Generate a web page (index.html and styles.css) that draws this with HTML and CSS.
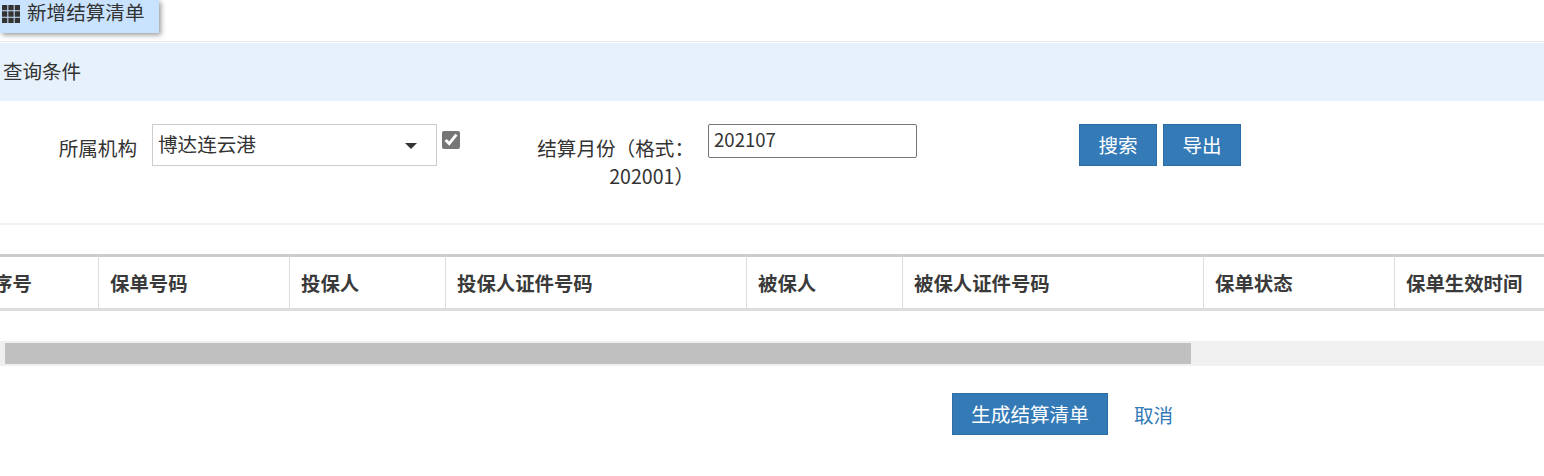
FILE: index.html
```html
<!DOCTYPE html>
<html lang="zh-CN">
<head>
<meta charset="utf-8">
<title>新增结算清单</title>
<link rel="stylesheet" href="styles.css">
</head>
<body>
<header class="tab">
  <svg class="tab-icon" width="18" height="18" viewBox="0 0 17 17" aria-hidden="true">
    <path d="M0 0h5v5H0zM6 0h5v5H6zM12 0h5v5h-5zM0 6h5v5H0zM6 6h5v5H6zM12 6h5v5h-5zM0 12h5v5H0zM6 12h5v5H6zM12 12h5v5h-5z"/>
  </svg>
  <span>新增结算清单</span>
</header>
<section class="panel-head">查询条件</section>
<form class="filters">
  <label class="label label-org" for="org">所属机构</label>
  <div class="select-wrap">
    <select id="org" class="select"><option>博达连云港</option></select>
  </div>
  <input class="check" type="checkbox" checked>
  <label class="label label-month" for="month">结算月份（格式：202001）</label>
  <input id="month" class="month" type="text" value="202107">
  <div class="actions">
    <button class="btn" type="button">搜索</button>
    <button class="btn" type="button">导出</button>
  </div>
</form>
<div class="table-clip">
  <table class="grid">
    <colgroup>
      <col class="c-no"><col class="c-m"><col class="c-s"><col class="c-l"><col class="c-s"><col class="c-l"><col class="c-m"><col class="c-last">
    </colgroup>
    <thead>
      <tr>
        <th class="th-no">序号</th><th>保单号码</th><th>投保人</th><th>投保人证件号码</th><th>被保人</th><th>被保人证件号码</th><th>保单状态</th><th>保单生效时间</th>
      </tr>
    </thead>
  </table>
</div>
<div class="scrollbar"><div class="thumb"></div></div>
<footer class="footer">
  <button class="btn btn-wide" type="button">生成结算清单</button>
  <a class="cancel" href="#">取消</a>
</footer>
</body>
</html>
```

FILE: styles.css
```css
* { box-sizing: border-box; }
html, body { margin: 0; padding: 0; }
body {
  width: 1544px;
  height: 476px;
  overflow: hidden;
  background: #fff;
  color: #333;
  font-family: "Noto Sans CJK SC", "Liberation Sans", sans-serif;
  font-size: 19.6px;
}
.tab {
  display: flex;
  align-items: center;
  width: 159px;
  height: 33px;
  padding: 0 0 9px 2px;
  background: #c9e2fd;
  box-shadow: 2px 2px 5px rgba(0, 0, 0, .4);
  line-height: 24px;
}
.tab-icon { margin-right: 7px; margin-top: 4px; fill: #333; flex: none; }
.panel-head {
  height: 60px;
  margin-top: 8px;
  padding-left: 3px;
  border-top: 1px solid #e8e8e8;
  background: linear-gradient(#fff 1px, #e6f1fb 1px);
  font-size: 19.5px;
  line-height: 58px;
}
.filters {
  display: flex;
  align-items: flex-start;
  height: 124px;
  padding-top: 23px;
  border-bottom: 2px solid #eef0f2;
}
.label { display: block; padding-top: 10px; text-align: right; line-height: 28px; }
.label-org { width: 137px; margin-right: 15px; white-space: nowrap; }
.select-wrap { position: relative; width: 285px; height: 42px; }
.select-wrap::after {
  content: "";
  position: absolute;
  right: 20px;
  top: 19px;
  border: 6px solid transparent;
  border-top-color: #333;
  border-bottom: 0;
  pointer-events: none;
}
.select {
  display: block;
  width: 100%;
  height: 42px;
  padding: 0 0 4px 5px;
  border: 1px solid #ccc;
  border-radius: 0;
  background: #fff;
  color: #333;
  font: inherit;
  appearance: none;
}
.check {
  width: 18px;
  height: 18px;
  margin: 7px 0 0 5px;
  accent-color: #767676;
}
.label-month { width: 160px; margin-left: 74px; }
.month {
  width: 209px;
  height: 34px;
  margin-left: 14px;
  padding: 0 5px 5px;
  border: 1px solid #767676;
  border-radius: 2px;
  color: #333;
  font: inherit;
  font-size: 18.6px;
}
.actions { display: flex; gap: 6px; margin-left: 162px; }
.btn {
  width: 78px;
  height: 42px;
  padding: 0;
  border: 1px solid #2e6da4;
  border-radius: 0;
  background: #337ab7;
  color: #fff;
  font: inherit;
  line-height: 40px;
}
.btn-wide { width: 156px; }
.table-clip { margin-top: 29px; overflow: hidden; }
.grid {
  width: 1641px;
  margin-left: -17px;
  border-collapse: separate;
  border-spacing: 0;
  table-layout: fixed;
}
.c-no { width: 115px; }
.c-m { width: 191px; }
.c-s { width: 156px; }
.c-l { width: 301px; }
.c-last { width: 230px; }
.grid th {
  height: 57px;
  padding: 0 11px;
  border-top: 3px solid #ccc;
  border-bottom: 3px solid #ddd;
  border-left: 1px solid #ddd;
  background: #fff;
  color: #3a3a3a;
  font-size: 19.4px;
  font-weight: 700;
  text-align: left;
  white-space: nowrap;
}
.grid .th-no { padding-left: 10px; border-left: 0; }
.scrollbar {
  height: 25px;
  margin-top: 30px;
  padding: 2px 0;
  background: #f0f0f0;
}
.thumb { width: 1186px; height: 21px; margin-left: 5px; background: #c0c0c0; }
.footer {
  display: flex;
  align-items: center;
  margin-top: 27px;
  padding-left: 952px;
}
.cancel {
  margin-left: 26px;
  color: #337ab7;
  text-decoration: none;
}
```
